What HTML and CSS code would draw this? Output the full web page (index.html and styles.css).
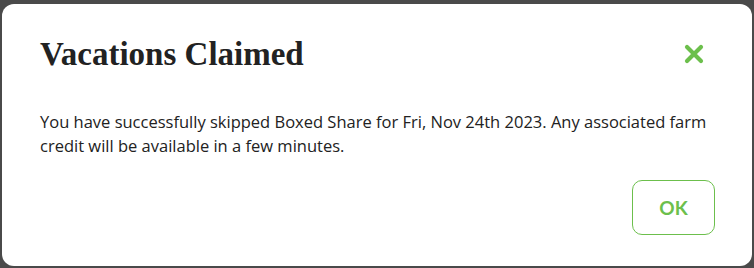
FILE: index.html
```html
<!DOCTYPE html>
<html lang="en">
<head>
<meta charset="UTF-8" />
<meta name="viewport" content="width=device-width, initial-scale=1" />
<title>Vacations Claimed</title>
<link rel="stylesheet" href="styles.css">
</head>
<body>

<!-- Confirmation dialog -->
<div class="modal" role="dialog" aria-labelledby="modalTitle">
  <div class="modal-header">
    <h2 id="modalTitle">Vacations Claimed</h2>
    <button type="button" class="close-btn" aria-label="Close">
      <svg width="20" height="20" viewBox="0 0 20 20">
        <path d="M3 3 L17 17 M17 3 L3 17" stroke="#6cbf4c" stroke-width="4.2" stroke-linecap="round" fill="none"/>
      </svg>
    </button>
  </div>
  <p class="modal-text">You have successfully skipped Boxed Share for Fri, Nov 24th 2023. Any associated farm credit will be available in a few minutes.</p>
  <div class="modal-actions">
    <button type="button" class="ok-btn">OK</button>
  </div>
</div>

</body>
</html>
```

FILE: styles.css
```css
body {
  margin: 0;
  padding: 4px 2px 2px 2px;
  background: #4a4a4a;
  font-family: "Open Sans", sans-serif;
}
.modal {
  background: white;
  border-radius: 12px;
  height: 262px;
  box-sizing: border-box;
  padding: 31px 37px 0 38px;
}
.modal-header {
  display: flex;
  justify-content: space-between;
  align-items: center;
}
.modal-header h2 {
  margin: 0;
  font-family: "Liberation Serif", serif;
  font-weight: bold;
  font-size: 33px;
  line-height: 38px;
  color: #222;
}
.close-btn {
  background: none;
  border: none;
  padding: 0;
  cursor: pointer;
  margin-right: 11px;
  display: flex;
}
.modal-text {
  margin: 37px 0 0 0;
  font-size: 16.5px;
  line-height: 24px;
  color: #222;
}
.modal-actions {
  display: flex;
  justify-content: flex-end;
  margin-top: 22px;
}
.ok-btn {
  width: 83px;
  height: 55px;
  background: white;
  border: 1px solid #6cbf4c;
  border-radius: 10px;
  color: #6cbf4c;
  font-family: Lato, sans-serif;
  font-weight: bold;
  font-size: 19px;
  cursor: pointer;
}
```
